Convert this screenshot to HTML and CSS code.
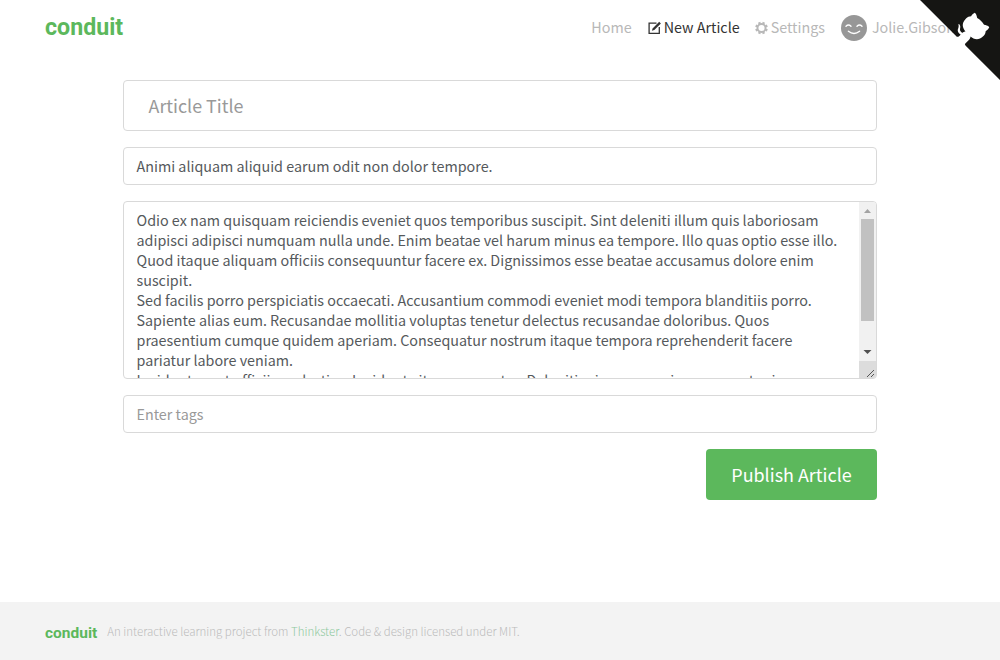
FILE: index.html
```html
<!DOCTYPE html>
<html lang="en">
<head>
<meta charset="utf-8">
<title>Editor — Conduit</title>
<link rel="stylesheet" href="styles.css">
</head>
<body>
<header class="navbar">
  <a class="brand">conduit</a>
  <nav class="nav">
    <a class="nav-link home"><span class="label">Home</span></a>
    <a class="nav-link active"><svg class="icon" viewBox="0 0 14 14"><path d="M8.500 2.200H1.100v10.200h10.200V6" fill="none" stroke="currentColor" stroke-width="1.300"/><path d="M4.600 7.400 11.200.8l1.700 1.700-6.600 6.600-2.400.6z" fill="currentColor"/></svg><span class="label">New Article</span></a>
    <a class="nav-link settings"><svg class="icon" viewBox="0 0 14 14"><circle cx="6.500" cy="7" r="4" fill="none" stroke="currentColor" stroke-width="1.900"/><g stroke="currentColor" stroke-width="2.400" transform="rotate(22.500 6.500 7)"><path d="M6.500.7v2M6.500 11.300v2M.2 7h2M10.800 7h2M2.050 2.550l1.400 1.400M9.550 10.050l1.400 1.400M10.950 2.550l-1.400 1.400M3.450 10.050l-1.400 1.400"/></g></svg><span class="label">Settings</span></a>
    <a class="nav-link user"><svg class="avatar" viewBox="0 0 26 26"><circle cx="13" cy="13" r="13" fill="#979797"/><path d="M5 11.300q2.500-2.400 5 0M16 11.300q2.500-2.400 5 0M7.400 16.200q5.600 4.600 11.200 0" fill="none" stroke="#fff" stroke-width="1.400" stroke-linecap="round"/></svg><span class="label">Jolie.Gibson</span></a>
  </nav>
</header>
<svg class="corner" viewBox="0 0 250 250"><path fill="#151513" d="M0 0 115 115h15l12 27 108 108V0z"/><path fill="#fff" d="M128.3 109C113.8 99.7 119 89.6 119 89.6 122 82.7 120.5 78.6 120.5 78.6 119.2 72 123.4 76.3 123.4 76.3 127.3 80.9 125.5 87.3 125.5 87.3 122.9 97.6 130.6 101.9 134.4 103.2"/><path fill="#fff" d="M115 115C114.9 115.1 118.7 116.5 119.8 115.4L133.7 101.6C136.9 99.2 139.9 98.4 142.2 98.6 133.8 88 127.5 74.4 143.8 58 148.5 53.4 154 51.2 159.7 51 160.3 49.4 163.2 43.6 171.4 40.1 171.4 40.1 176.1 42.5 178.8 56.2 183.1 58.6 187.2 61.8 190.9 65.4 194.5 69 197.7 73.2 200.1 77.6 213.8 80.2 216.3 84.9 216.3 84.9 212.7 93.1 206.9 96 205.4 96.6 205.1 102.4 203 107.8 198.3 112.5 181.9 128.9 168.3 122.5 157.7 114.1 157.9 116.9 156.7 120.9 152.7 124.9L141 136.5C139.8 137.7 141.6 141.9 141.8 141.8z"/></svg>
<main class="editor">
  <div class="field large placeholder">Article Title</div>
  <div class="field">Animi aliquam aliquid earum odit non dolor tempore.</div>
  <div class="field area">
    <div class="text">Odio ex nam quisquam reiciendis eveniet quos temporibus suscipit. Sint deleniti illum quis laboriosam
adipisci adipisci numquam nulla unde. Enim beatae vel harum minus ea tempore. Illo quas optio esse illo.
Quod itaque aliquam officiis consequuntur facere ex. Dignissimos esse beatae accusamus dolore enim
suscipit.
Sed facilis porro perspiciatis occaecati. Accusantium commodi eveniet modi tempora blanditiis porro.
Sapiente alias eum. Recusandae mollitia voluptas tenetur delectus recusandae doloribus. Quos
praesentium cumque quidem aperiam. Consequatur nostrum itaque tempora reprehenderit facere
pariatur labore veniam.
Incidunt amet officiis molestias. Incidunt vitae aspernatur. Deleniti minus corporis consequatur in.</div>
    <div class="scrollbar">
      <svg class="arrow" viewBox="0 0 17 17"><path d="M5 11h7L8.500 7z" fill="#a3a3a3"/></svg>
      <div class="thumb"></div>
      <svg class="arrow down" viewBox="0 0 17 17"><path d="M4.500 6h8L8.500 10z" fill="#505050"/></svg>
      <svg class="grip" viewBox="0 0 17 17"><path d="M8 16l7-7M12 16l3-3" stroke="#555" stroke-width="1"/></svg>
    </div>
  </div>
  <div class="field placeholder">Enter tags</div>
  <button class="publish" type="button">Publish Article</button>
</main>
<footer class="footer">
  <a class="footer-brand">conduit</a>
  <span class="attribution">An interactive learning project from <a class="link">Thinkster</a>. Code &amp; design licensed under MIT.</span>
</footer>
</body>
</html>
```
FILE: styles.css
```css
* { box-sizing: border-box; }
body {
  margin: 0;
  height: 660px;
  display: flex;
  flex-direction: column;
  overflow: hidden;
  background: #fff;
  font-family: "Noto Sans CJK SC", "Noto Sans", sans-serif;
  font-size: 14.33px;
  color: #55595c;
}
.navbar {
  height: 56px;
  padding: 0 45px;
  display: flex;
  align-items: center;
  justify-content: space-between;
  flex: none;
}
.brand {
  font: 700 23.2px/30px Roboto, sans-serif;
  color: #5cb85c;
  padding-bottom: 2px;
}
.nav { display: flex; gap: 16px; }
.nav-link {
  display: flex;
  align-items: center;
  height: 26px;
  color: #b8b8b8;
  white-space: nowrap;
}
.label { padding-bottom: 3px; }
.active { color: #333; margin-right: -1px; }
.icon { width: 14px; height: 14px; margin-right: 2px; margin-bottom: 1px; }
.avatar { width: 26px; height: 26px; margin-right: 5px; }
.corner { position: absolute; top: 0; right: 0; width: 80px; height: 80px; }
.editor {
  width: 754px;
  margin: 24px auto 0;
  display: flex;
  flex-direction: column;
  gap: 16px;
}
.field {
  height: 38px;
  padding: 0 12.5px;
  border: 1px solid #d9d9d9;
  border-radius: 4px;
  line-height: 36px;
  white-space: pre;
}
.large { height: 51px; padding: 0 24.5px; font-size: 17.9px; line-height: 49px; }
.placeholder { color: #999; }
.area {
  height: 178px;
  padding: 0 0 0 12.5px;
  display: flex;
  justify-content: space-between;
  overflow: hidden;
  line-height: 20px;
}
.text { padding-top: 8px; height: 176px; width: 710px; overflow: hidden; }
.scrollbar { width: 17px; height: 176px; background: #f1f1f1; display: flex; flex-direction: column; }
.arrow, .grip { width: 17px; height: 17px; flex: none; display: block; }
.down { margin-top: auto; }
.grip { background: #dcdcdc; }
.thumb { width: 13px; height: 102px; margin: 0 2px; background: #c1c1c1; }
.publish {
  align-self: flex-end;
  width: 171px;
  height: 51px;
  padding: 0;
  border: 0;
  border-radius: 4px;
  background: #5cb85c;
  color: #fff;
  font: 400 17.95px/49px "Noto Sans CJK SC", "Noto Sans", sans-serif;
}
.footer {
  height: 58px;
  margin-top: auto;
  padding: 2px 45px 0;
  display: flex;
  align-items: center;
  background: #f3f3f3;
  flex: none;
}
.footer-brand { font: 700 15.5px/20px Roboto, sans-serif; color: #5cb85c; margin-right: 10px; padding-top: 1px; }
.attribution { font-size: 11.48px; font-weight: 300; color: #bbb; white-space: nowrap; padding-bottom: 3px; }
.link { color: #8fc9a0; }
```
